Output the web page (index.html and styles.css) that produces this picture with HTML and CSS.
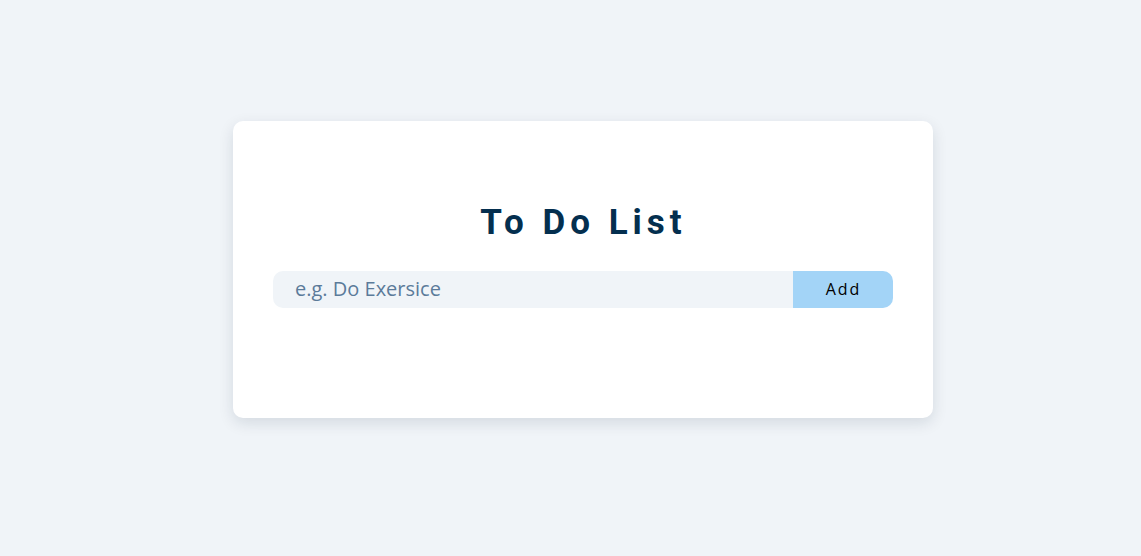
FILE: index.html
```html
<!DOCTYPE html>
<html lang="en">
<head>
<meta charset="utf-8">
<title>To Do List</title>
<link rel="stylesheet" href="styles.css">
</head>
<body>
<main class="page">
  <section class="card">
    <h1 class="title">To Do List</h1>
    <form class="add-row" onsubmit="return false">
      <input class="task-input" type="text" placeholder="e.g. Do Exersice">
      <button class="add-btn" type="submit">Add</button>
    </form>
    <ul class="tasks"></ul>
  </section>
</main>
</body>
</html>
```
FILE: styles.css
```css
* { box-sizing: border-box; }
html, body { margin: 0; padding: 0; }
body {
  background: #f0f4f8;
  font-family: "Open Sans", sans-serif;
  height: 556px;
}
.page {
  display: flex;
  justify-content: center;
  padding: 121px 0 0 25px;
}
.card {
  width: 700px;
  height: 297px;
  background: #ffffff;
  border-radius: 10px;
  box-shadow: 0 5px 15px rgba(0, 30, 60, 0.12);
  padding: 81px 40px 40px;
}
.title {
  margin: 0;
  text-align: center;
  font-family: Roboto, sans-serif;
  font-weight: 700;
  font-size: 35px;
  line-height: 42px;
  letter-spacing: 5px;
  color: #042f4f;
  padding-left: 1px;
}
.add-row {
  display: flex;
  margin: 27px 0 0;
  height: 37px;
}
.task-input {
  flex: 1;
  border: none;
  outline: none;
  background: #f0f4f8;
  border-radius: 10px 0 0 10px;
  padding: 0 22px 2px;
  font-family: "Open Sans", sans-serif;
  font-size: 20px;
  color: #002743;
}
.task-input::placeholder { color: #5b7b9a; }
.add-btn {
  width: 100px;
  border: none;
  background: #a3d4f7;
  border-radius: 0 10px 10px 0;
  font-family: "Open Sans", sans-serif;
  font-size: 16px;
  letter-spacing: 2px;
  color: #000000;
  padding: 0 0 2px 1px;
  cursor: pointer;
}
.tasks { list-style: none; margin: 0; padding: 0; }
```
